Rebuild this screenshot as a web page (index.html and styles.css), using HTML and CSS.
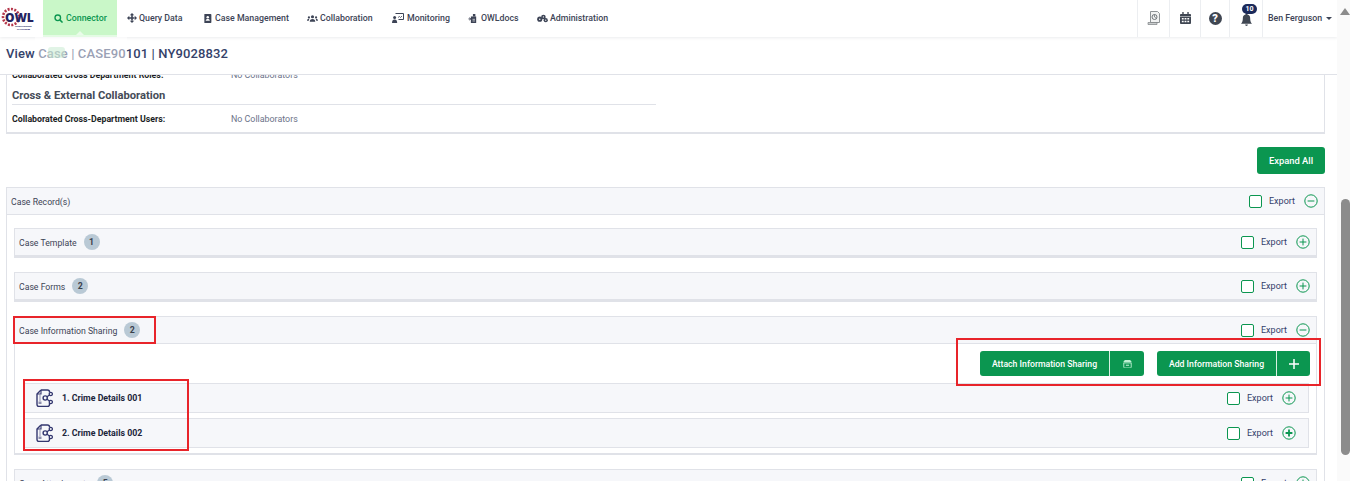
FILE: index.html
```html
<!DOCTYPE html>
<html lang="en">
<head>
<meta charset="utf-8">
<title>View Case</title>
<link rel="stylesheet" href="styles.css">
</head>
<body>
<svg class="defs" width="0" height="0" aria-hidden="true">
  <symbol id="i-share-doc" viewBox="0 0 17 18">
    <path d="M5 1L1 5v10.500a2 2 0 0 0 2 2h8.500a2 2 0 0 0 2-2V14M5 1h6.500a2 2 0 0 1 2 2v.5" fill="none" stroke="#33376f" stroke-width="1.400"/>
    <path d="M5 1v4H1" fill="none" stroke="#33376f" stroke-width="1.100"/>
    <path d="M3 6.500h2v1H3zM3 8.500h2v1H3zM3 10.500h2v1H3zM2.500 12.500h3V15h-3z" fill="#8d90ad"/>
    <circle cx="9.200" cy="9" r="2.100" fill="none" stroke="#33376f" stroke-width="1.400"/>
    <circle cx="14.800" cy="5" r="1.600" fill="none" stroke="#33376f" stroke-width="1.300"/>
    <circle cx="14.800" cy="13" r="1.600" fill="none" stroke="#33376f" stroke-width="1.300"/>
    <path d="M11 7.700l2.500-1.800M11 10.300l2.500 1.800" stroke="#33376f" stroke-width="1.200"/>
  </symbol>
  <symbol id="i-plus" viewBox="0 0 14 14">
    <circle cx="7" cy="7" r="6.200" fill="none" stroke="#0b9650" stroke-width="1"/>
    <path d="M3.600 7h6.800M7 3.600v6.800" stroke="#0b9650" stroke-width="1"/>
  </symbol>
  <symbol id="i-plus-strong" viewBox="0 0 14 14">
    <circle cx="7" cy="7" r="6.200" fill="none" stroke="#0b9650" stroke-width="1"/>
    <path d="M3.600 7h6.800M7 3.600v6.800" stroke="#0b9650" stroke-width="1.800"/>
  </symbol>
  <symbol id="i-minus" viewBox="0 0 14 14">
    <circle cx="7" cy="7" r="6.200" fill="none" stroke="#0b9650" stroke-width="1"/>
    <path d="M3.600 7h6.800" stroke="#0b9650" stroke-width="1"/>
  </symbol>
</svg>
<div class="app">
  <div class="main">
    <header class="nav">
      <div class="logo">
        <svg class="logo-gear" viewBox="0 0 20 20" aria-hidden="true"><circle cx="10" cy="10" r="8" fill="none" stroke="#b5364a" stroke-width="2.600" stroke-dasharray="2 1.400"/></svg>
        <span class="logo-word">OWL</span>
        <span class="logo-sub">INTELLIGENCE<br>PLATFORM</span>
      </div>
      <a class="tab tab-active">
        <svg class="tab-icon" viewBox="0 0 10 10"><circle cx="4.200" cy="4.200" r="3.100" fill="none" stroke="#0b9650" stroke-width="1.500"/><path d="M6.500 6.500l3 3" stroke="#0b9650" stroke-width="1.700"/></svg>
        Connector
      </a>
      <a class="tab tab-query">
        <svg class="tab-icon tab-icon-arrows" viewBox="0 0 10 10"><path d="M5 0l2.200 2.300H2.800zM5 10l2.200-2.300H2.800zM0 5l2.300-2.200v4.400zM10 5L7.700 2.800v4.400zM4.200 2h1.600v6H4.200zM2 4.200h6v1.600H2z" fill="#3d4456"/></svg>
        Query Data
      </a>
      <a class="tab tab-case">
        <svg class="tab-icon" viewBox="0 0 10 10"><path d="M1.500 0h7a.8.8 0 0 1 .8.800v8.400a.8.8 0 0 1-.8.800h-7z" fill="#3d4456"/><circle cx="5.300" cy="3.700" r="1.400" fill="#fff"/><path d="M3 7.600c0-1.400 1-2 2.300-2s2.300.6 2.300 2z" fill="#fff"/></svg>
        Case Management
      </a>
      <a class="tab tab-collab">
        <svg class="tab-icon tab-icon-wide" viewBox="0 0 12 9"><circle cx="6" cy="2.600" r="1.700" fill="#3d4456"/><circle cx="2.100" cy="3.300" r="1.200" fill="#3d4456"/><circle cx="9.900" cy="3.300" r="1.200" fill="#3d4456"/><path d="M3 8c0-2 1.200-3 3-3s3 1 3 3zM0 7c0-1.400.8-2.200 2-2.200l.6.1A4 4 0 0 0 2 7zM12 7c0-1.400-.8-2.200-2-2.200l-.6.1A4 4 0 0 1 10 7z" fill="#3d4456"/></svg>
        Collaboration
      </a>
      <a class="tab tab-monitor">
        <svg class="tab-icon tab-icon-mon" viewBox="0 0 12 10"><path d="M3.500.5h8v6h-5" fill="none" stroke="#3d4456" stroke-width="1"/><path d="M6 4.500l1.500-1 1 1 1.500-1.500" fill="none" stroke="#3d4456" stroke-width=".8"/><circle cx="2.600" cy="4.500" r="1.500" fill="#3d4456"/><path d="M0 10c0-2.500 1-3.500 2.600-3.500S5.200 7.500 5.200 10z" fill="#3d4456"/></svg>
        Monitoring
      </a>
      <a class="tab tab-docs">
        <svg class="tab-icon" viewBox="0 0 10 11"><path d="M3 3h6.500v8H3z" fill="#3d4456"/><path d="M5.500 0h3v3h-3z" fill="#3d4456"/><path d="M0 6h3M1 4.500l2 1.500-2 1.500" stroke="#3d4456" stroke-width="1" fill="none"/><path d="M5 6.500h3M5 8.500h3" stroke="#fff" stroke-width=".8"/></svg>
        OWLdocs
      </a>
      <a class="tab tab-admin">
        <svg class="tab-icon tab-icon-wide" viewBox="0 0 12 9"><circle cx="3" cy="5.200" r="2.800" fill="#3d4456"/><circle cx="7" cy="2.800" r="2.500" fill="#3d4456"/><circle cx="9.500" cy="6.300" r="2.300" fill="#3d4456"/><circle cx="3" cy="5.200" r=".8" fill="#fff"/><circle cx="7" cy="2.800" r=".7" fill="#fff"/><circle cx="9.500" cy="6.300" r=".7" fill="#fff"/></svg>
        Administration
      </a>
      <div class="nav-right">
        <span class="tool tool-report">
          <svg class="tool-svg" viewBox="0 0 14 14"><path d="M3.500.5h7l2 2v9h-9z" fill="#f1f2f2" stroke="#8e9396" stroke-width="1"/><circle cx="7.500" cy="6" r="2.500" fill="none" stroke="#70767a" stroke-width="1"/><path d="M7.500 3.500V6l2 1.500" stroke="#70767a" stroke-width=".8" fill="none"/><path d="M1 11.500h9v2H1z" fill="#c9cccd" stroke="#7c8184" stroke-width=".7"/></svg>
        </span>
        <span class="tool tool-cal">
          <svg class="tool-svg tool-cal-svg" viewBox="0 0 12 13"><path d="M0 3a1 1 0 0 1 1-1h1.500V0h1.500v2h4V0h1.500v2H11a1 1 0 0 1 1 1v1.500H0zM0 5h12v7a1 1 0 0 1-1 1H1a1 1 0 0 1-1-1z" fill="#3f4652"/><path d="M2 6.500h2v1.500H2zM5 6.500h2v1.500H5zM8 6.500h2v1.500H8zM2 9.500h2V11H2zM5 9.500h2V11H5zM8 9.500h2V11H8z" fill="#fff"/></svg>
        </span>
        <span class="tool tool-help"><span class="help-glyph">?</span></span>
        <span class="tool tool-bell">
          <svg class="bell" viewBox="0 0 12 14"><path d="M6 0a1 1 0 0 1 1 1v.6A4 4 0 0 1 10 5.500c0 3 .6 4.500 2 6H0c1.400-1.500 2-3 2-6a4 4 0 0 1 3-3.900V1a1 1 0 0 1 1-1zM4.500 12.500h3a1.500 1.500 0 0 1-3 0z" fill="#3f4652"/></svg>
          <span class="bell-badge">10</span>
        </span>
        <span class="user">Ben Ferguson<span class="caret"></span></span>
      </div>
    </header>

    <div class="titlebar"><h1 class="page-title">View Case | CASE90101 | NY9028832</h1></div>

    <main class="content">
      <section class="summary">
        <div class="summary-row summary-clip"><span class="summary-label">Collaborated Cross Department Roles:</span><span class="summary-value">No Collaborators</span></div>
        <h2 class="summary-heading">Cross &amp; External Collaboration</h2>
        <div class="summary-row"><span class="summary-label">Collaborated Cross-Department Users:</span><span class="summary-value">No Collaborators</span></div>
      </section>

      <div class="expand-bar"><button class="btn btn-expand">Expand All</button></div>

      <section class="panel">
        <div class="panel-head panel-head-outer">
          <span class="head-title">Case Record(s)</span>
          <span class="head-tools"><span class="check"></span><span class="export">Export</span><svg class="round"><use href="#i-minus"/></svg></span>
        </div>
        <div class="panel-body">
          <div class="sub sub-closed">
            <div class="panel-head">
              <span class="head-title">Case Template</span><span class="badge">1</span>
              <span class="head-tools"><span class="check"></span><span class="export">Export</span><svg class="round"><use href="#i-plus"/></svg></span>
            </div>
          </div>
          <div class="sub sub-closed">
            <div class="panel-head">
              <span class="head-title">Case Forms</span><span class="badge">2</span>
              <span class="head-tools"><span class="check"></span><span class="export">Export</span><svg class="round"><use href="#i-plus"/></svg></span>
            </div>
          </div>
          <div class="sub sub-open">
            <div class="panel-head panel-head-open">
              <span class="head-title">Case Information Sharing</span><span class="badge">2</span>
              <span class="head-tools"><span class="check"></span><span class="export">Export</span><svg class="round"><use href="#i-minus"/></svg></span>
            </div>
            <div class="sub-body">
              <div class="actions">
                <div class="split">
                  <span class="split-label split-label-attach">Attach Information Sharing</span>
                  <span class="split-icon split-attach">
                    <svg class="archive" viewBox="0 0 10 9"><path d="M2 0h6l2 2.500H0z" fill="#bff0d3"/><path d="M.8 3.300h8.400V8a1 1 0 0 1-1 1H1.800a1 1 0 0 1-1-1z" fill="none" stroke="#bff0d3" stroke-width="1"/><path d="M3.200 5.300h3.600v1.200H3.200z" fill="#bff0d3"/></svg>
                  </span>
                </div>
                <div class="split">
                  <span class="split-label split-label-add">Add Information Sharing</span>
                  <span class="split-icon split-add">
                    <svg class="plus" viewBox="0 0 10 10"><path d="M5 0v10M0 5h10" stroke="#fff" stroke-width="1.500"/></svg>
                  </span>
                </div>
              </div>
              <div class="item">
                <svg class="item-icon"><use href="#i-share-doc"/></svg>
                <span class="item-title">1. Crime Details 001</span>
                <span class="head-tools"><span class="check"></span><span class="export">Export</span><svg class="round"><use href="#i-plus"/></svg></span>
              </div>
              <div class="item">
                <svg class="item-icon"><use href="#i-share-doc"/></svg>
                <span class="item-title">2. Crime Details 002</span>
                <span class="head-tools"><span class="check"></span><span class="export">Export</span><svg class="round"><use href="#i-plus-strong"/></svg></span>
              </div>
            </div>
          </div>
          <div class="sub sub-closed">
            <div class="panel-head">
              <span class="head-title">Case Attachments</span><span class="badge">5</span>
              <span class="head-tools"><span class="check"></span><span class="export">Export</span><svg class="round"><use href="#i-plus"/></svg></span>
            </div>
          </div>
        </div>
      </section>
    </main>
  </div>
  <aside class="scrollbar">
    <span class="scroll-arrow"></span>
    <span class="scroll-thumb"></span>
  </aside>
</div>

<div class="tooltip-ghost"><span class="ghost-chip"></span></div>
<div class="mark mark-head"></div>
<div class="mark mark-items"></div>
<div class="mark mark-actions"></div>
</body>
</html>
```
FILE: styles.css
```css
* { box-sizing: border-box; }
html, body { margin: 0; height: 481px; overflow: hidden; background: #fff; }
body { font-family: "Roboto", "Liberation Sans", sans-serif; font-size: 8.8px; color: #3d4456; position: relative; }
.defs { position: absolute; }

.app { display: flex; width: 1350px; height: 481px; }
.main { width: 1337px; display: flex; flex-direction: column; height: 481px; overflow: hidden; }

/* Top nav */
.nav { height: 37px; display: flex; align-items: stretch; flex: none; position: relative; z-index: 2; background: #fff; box-shadow: 0 1px 3px rgba(60,64,80,.1); }
.logo { width: 43px; position: relative; flex: none; }
.logo-gear { position: absolute; left: 1px; top: 7px; width: 20px; height: 20px; }
.logo-word { position: absolute; left: 5px; top: 12px; font: 800 12px/12px "Open Sans", sans-serif; color: #24235f; letter-spacing: -.1px; }
.logo-sub { position: absolute; left: 15px; top: 25px; font: 700 2.500px/3px "Roboto", sans-serif; color: #24235f; text-align: center; }

.tab { display: flex; align-items: center; flex: none; font-weight: 500; font-size: 8.8px; color: #3d4456; gap: 3px; white-space: nowrap; padding-bottom: 1px; }
.tab-icon { width: 9px; height: 9px; flex: none; }
.tab-icon-arrows { width: 10px; height: 10px; }
.tab-icon-wide { width: 11px; }
.tab-icon-mon { width: 12px; height: 10px; }
.tab-active { width: 74px; background: #c9f7c8; color: #0b9650; padding-left: 11px; }
.tab-query { width: 86px; padding-left: 10px; gap: 2px; }
.tab-case { width: 104px; }
.tab-collab { width: 85px; gap: 2px; }
.tab-monitor { width: 76px; }
.tab-docs { width: 69px; gap: 4px; }
.tab-admin { gap: 2px; }
.nav-right { margin-left: auto; display: flex; align-items: stretch; }
.tool { display: flex; align-items: center; justify-content: center; border-left: 1px solid #eceef1; position: relative; padding-bottom: 1px; }
.tool-report { width: 32px; }
.tool-cal { width: 31px; }
.tool-help { width: 29px; }
.tool-bell { width: 33px; }
.tool-svg { width: 14px; height: 14px; }
.tool-cal-svg { width: 11px; height: 12px; }
.help-glyph { width: 13px; height: 13px; border-radius: 50%; background: #3f4652; color: #fff; font-size: 11px; font-weight: 900; line-height: 13px; text-align: center; }
.bell { width: 11px; height: 13px; margin-top: 2px; }
.bell-badge { position: absolute; left: 12px; top: 4px; width: 15px; height: 10px; border-radius: 5px; background: #1b2a5b; color: #fff; font-size: 7px; font-weight: 700; line-height: 10px; text-align: center; }
.user { width: 75px; border-left: 1px solid #eceef1; display: flex; align-items: center; padding: 0 0 1px 5px; font-weight: 500; color: #3d4456; white-space: nowrap; }
.caret { width: 0; height: 0; border-left: 3px solid transparent; border-right: 3px solid transparent; border-top: 3px solid #3d4456; margin-left: 4px; margin-top: 1px; }

/* Title */
.titlebar { height: 38px; flex: none; padding: 9px 0 0 6px; background: #fff; border-bottom: 1px solid #e0e2e8; }
.page-title { margin: 0; font-size: 13px; line-height: 15px; font-weight: 500; color: #35426a; letter-spacing: .12px; }

/* Content */
.content { flex: 1; padding: 0 12px 0 6px; overflow: hidden; }
.summary { border: 1px solid #e0e2e8; border-top: 0; border-bottom-width: 2px; padding: 0 5px; height: 59px; overflow: hidden; }
.summary-clip { margin-top: -8px; }
.summary-row { display: flex; align-items: center; height: 27px; }
.summary-clip.summary-row { height: 16px; }
.summary-label { width: 219px; font-weight: 700; color: #1c1f26; flex: none; }
.summary-value { color: #6c7389; font-size: 8.9px; }
.summary-heading { margin: 0; width: 644px; height: 22px; padding-top: 5px; line-height: 16px; font-size: 11.2px; font-weight: 700; color: #454b57; border-bottom: 1px solid #e0e2e8; }

.expand-bar { display: flex; justify-content: flex-end; margin: 13px 0; }
.btn { border: 0; background: #0b9650; color: #fff; border-radius: 3px; font: 500 9.4px "Roboto", sans-serif; }
.btn-expand { width: 68px; height: 27px; padding: 0; }

.panel { border: 1px solid #e0e2e8; border-bottom: 0; }
.panel-head { display: flex; align-items: center; height: 26px; background: #f6f7fa; padding: 0 6px 0 4px; }
.panel-head-outer { height: 27px; border-bottom: 1px solid #e0e2e8; padding: 0 6px 0 4px; }
.head-title { color: #3d4456; font-size: 8.7px; padding-top: 1px; }
.head-tools { margin-left: auto; display: flex; align-items: center; }
.check { width: 13px; height: 13px; border: 1px solid #0b9650; border-radius: 2px; background: #fff; }
.export { width: 25px; margin: 0 10px 0 7px; color: #34406a; font-size: 9px; }
.round { width: 14px; height: 14px; flex: none; }
.badge { width: 16px; height: 16px; border-radius: 50%; background: #b9c9d5; margin-left: 7px; text-align: center; line-height: 16px; font-weight: 700; color: #39404c; }

.panel-body { padding: 13px 7px 0; display: flex; flex-direction: column; gap: 14px; }
.sub { border: 1px solid #e0e2e8; }
.sub-closed { border-bottom-width: 3px; height: 30px; }
.sub-open { border-bottom-width: 2px; }
.panel-head-open { height: 27px; border-bottom: 1px solid #e0e2e8; }
.sub-body { padding: 7px 7px 5px 8px; display: flex; flex-direction: column; gap: 5px; }

.actions { display: flex; justify-content: flex-end; gap: 13px; margin: 0 -1px 2px 0; }
.split { display: flex; height: 25px; background: #0b9650; color: #fff; border-radius: 3px; font-weight: 500; font-size: 8.7px; align-items: stretch; }
.split-label { display: flex; align-items: center; justify-content: center; white-space: nowrap; }
.split-label-attach { width: 129px; }
.split-label-add { width: 119px; }
.split-icon { display: flex; align-items: center; justify-content: center; border-left: 1px solid #d9f1e3; }
.split-attach { width: 35px; }
.split-add { width: 34px; }
.archive { width: 9px; height: 8px; }
.plus { width: 10px; height: 10px; }

.item { display: flex; align-items: center; height: 30px; background: #f6f7fa; border: 1px solid #e0e2e8; padding: 0 12px 0 12px; }
.item-icon { width: 17px; height: 18px; flex: none; }
.item-title { margin-left: 9px; font-weight: 700; color: #20253a; }

/* Scrollbar */
.scrollbar { width: 13px; background: #fafafa; position: relative; display: flex; flex-direction: column; align-items: center; padding-top: 8px; }
.scroll-arrow { width: 0; height: 0; border-left: 5px solid transparent; border-right: 5px solid transparent; border-bottom: 7px solid #8c8c8c; margin-left: 3px; }
.scroll-thumb { width: 9px; height: 256px; margin: 184px 0 0 3px; background: #8c8c8c; border-radius: 5px; }

/* Overlays */
.tooltip-ghost { position: absolute; left: 35px; top: 35px; width: 92px; height: 36px; background: rgba(255,255,255,.5); z-index: 3; }
.tooltip-ghost::before { content: ""; position: absolute; left: 41px; top: -4px; border-left: 4px solid transparent; border-right: 4px solid transparent; border-bottom: 4px solid rgba(255,255,255,.6); }
.ghost-chip { position: absolute; left: 13px; top: 12px; width: 17px; height: 11px; border-radius: 3px; background: rgba(201,235,210,.55); }
.mark { position: absolute; border: 2px solid #e8242a; z-index: 4; pointer-events: none; }
.mark-head { left: 13px; top: 316px; width: 143px; height: 28px; }
.mark-items { left: 23px; top: 379px; width: 166px; height: 72px; }
.mark-actions { left: 956px; top: 338px; width: 365px; height: 48px; }
```
